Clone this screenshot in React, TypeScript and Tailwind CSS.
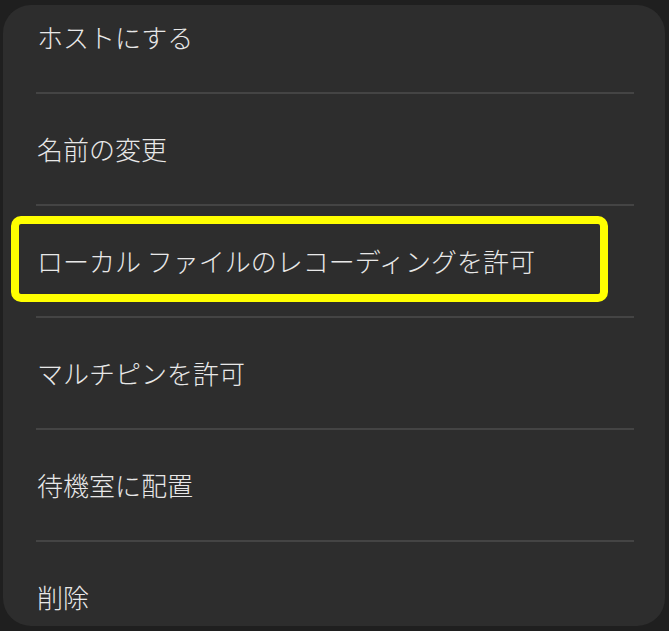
import React from 'react';

const items = [
  'ホストにする',
  '名前の変更',
  'ローカル ファイルのレコーディングを許可',
  'マルチピンを許可',
  '待機室に配置',
  '削除',
];

export default function App() {
  return (
    <div
      className="relative w-[669px] h-[631px] bg-[#1f1f1f] pt-[5px] pl-[3px] pr-[4px] pb-[5px]"
      style={{ fontFamily: '"Noto Sans CJK JP", "Noto Sans", sans-serif' }}
    >
      <div className="h-full rounded-[28px] bg-[#2d2d2d] overflow-hidden">
        <div className="-mt-[23px] flex flex-col">
          {items.map((label, i) => (
            <React.Fragment key={label}>
              {i > 0 && <div className="ml-[33px] mr-[31px] h-[2px] bg-[#444444]" />}
              <div className="h-[110px] flex items-center pl-[34px] text-[26px] font-light text-[#e8e8e8] leading-none">
                {label}
              </div>
            </React.Fragment>
          ))}
        </div>
      </div>
      {/* highlight annotation */}
      <div className="absolute left-[11px] top-[216px] w-[597px] h-[86px] border-[8px] border-[#ffff00] rounded-[10px]" />
    </div>
  );
}
